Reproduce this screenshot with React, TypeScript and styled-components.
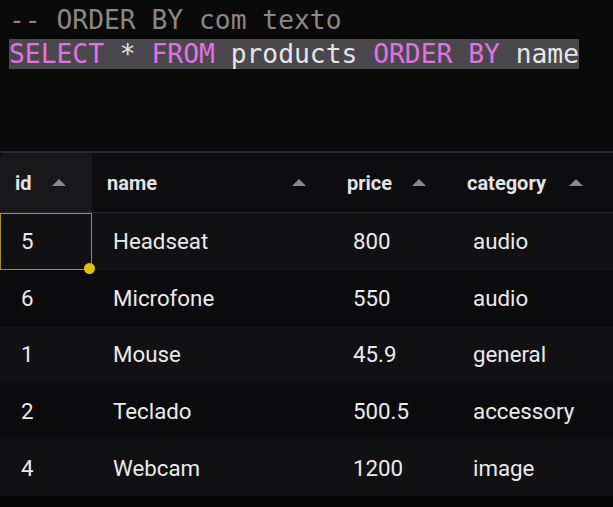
import React from "react";
import styled, { createGlobalStyle } from "styled-components";

const GlobalStyle = createGlobalStyle`
  html, body { margin: 0; padding: 0; background: #0b0a0b; }
  body { width: 613px; height: 507px; overflow: hidden; }
`;

const Page = styled.div`
  width: 613px;
  height: 507px;
  background: #060506;
  display: flex;
  flex-direction: column;
`;

const Editor = styled.div`
  height: 151px;
  flex-shrink: 0;
  background: #0b0a0b;
  padding: 3px 0 0 9px;
  box-sizing: border-box;
  font-family: "DejaVu Sans Mono", monospace;
  font-size: 26.3px;
  line-height: 34px;
  color: #e4e3e4;
  white-space: pre;
`;

const Line = styled.div`
  height: 34px;
`;

const Selected = styled.span`
  background: #4a484c;
`;

const Tok = styled.span<{ $kind: "kw" | "comment" | "text" }>`
  color: ${(p) =>
    p.$kind === "kw" ? "#e271e2" : p.$kind === "comment" ? "#8b8884" : "#e6e5e6"};
`;

const Table = styled.div`
  border-top: 2px solid #29282a;
  display: grid;
  grid-template-columns: 92px 240px 120px 157px 1fr;
  font-family: Roboto, "Noto Sans", sans-serif;
`;

const HeadCell = styled.div<{ $active?: boolean }>`
  height: 59px;
  border-bottom: 1px solid #27262a;
  background: ${(p) => (p.$active ? "#18171a" : "#0d0c0e")};
  border-top-left-radius: ${(p) => (p.$active ? "4px" : "0")};
  display: flex;
  align-items: center;
  justify-content: space-between;
  padding: 0 26px 0 15px;
  color: #e3e2e4;
  font-size: 20px;
  font-weight: 700;
`;

const Filler = styled.div<{ $odd?: boolean; $head?: boolean }>`
  background: ${(p) => (p.$head ? "#0d0c0e" : p.$odd ? "#111013" : "#0b0a0c")};
  border-bottom: ${(p) => (p.$head ? "1px solid #27262a" : "none")};
`;

const SortUp = styled.span`
  width: 0;
  height: 0;
  border-left: 7px solid transparent;
  border-right: 7px solid transparent;
  border-bottom: 7px solid #88878a;
`;

const Cell = styled.div<{ $odd: boolean; $selected?: boolean }>`
  position: relative;
  height: 56.6px;
  display: flex;
  align-items: center;
  padding-left: 21px;
  background: ${(p) => (p.$odd ? "#111013" : "#0b0a0c")};
  color: #ebeaeb;
  font-size: 22.3px;
  box-shadow: ${(p) => (p.$selected ? "inset 0 0 0 1px #a88e1c" : "none")};
  &::after {
    content: "";
    display: ${(p) => (p.$selected ? "block" : "none")};
    position: absolute;
    right: -3px;
    bottom: -4px;
    width: 11px;
    height: 11px;
    border-radius: 50%;
    background: #dcc00a;
    z-index: 2;
  }
`;

const columns = ["id", "name", "price", "category"];
const rows = [
  ["5", "Headseat", "800", "audio"],
  ["6", "Microfone", "550", "audio"],
  ["1", "Mouse", "45.9", "general"],
  ["2", "Teclado", "500.5", "accessory"],
  ["4", "Webcam", "1200", "image"],
];

export default function App() {
  return (
    <Page>
      <GlobalStyle />
      <Editor>
        <Line>
          <Tok $kind="comment">-- ORDER BY com texto</Tok>
        </Line>
        <Line>
          <Selected>
            <Tok $kind="kw">SELECT</Tok>
            <Tok $kind="text"> * </Tok>
            <Tok $kind="kw">FROM</Tok>
            <Tok $kind="text"> products </Tok>
            <Tok $kind="kw">ORDER BY</Tok>
            <Tok $kind="text"> name</Tok>
          </Selected>
        </Line>
      </Editor>
      <Table>
        {columns.map((c, i) => (
          <HeadCell key={c} $active={i === 0}>
            <span>{c}</span>
            <SortUp />
          </HeadCell>
        ))}
        <Filler $head />
        {rows.map((r, ri) => (
          <React.Fragment key={ri}>
            {r.map((v, ci) => (
              <Cell key={ci} $odd={ri % 2 === 0} $selected={ri === 0 && ci === 0}>
                {v}
              </Cell>
            ))}
            <Filler $odd={ri % 2 === 0} />
          </React.Fragment>
        ))}
      </Table>
    </Page>
  );
}
